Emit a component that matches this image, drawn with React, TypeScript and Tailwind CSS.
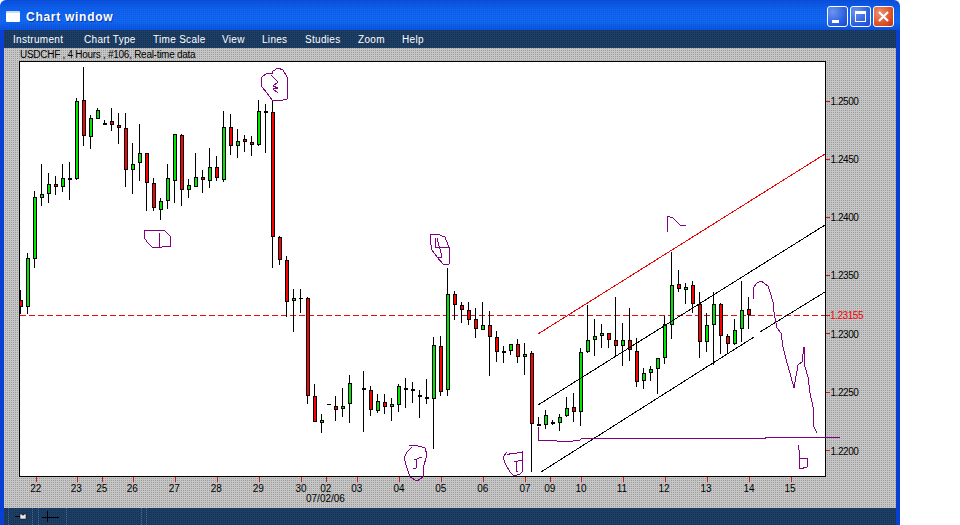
// Chart window: old forex charting app with hand drawn marks on top
type Candle = [number, number, number, number, number, 'g' | 'r' | 'd'];

// index, high, low, body top, body bottom, colour (all in page pixels)
const candles: Candle[] = [
  [0, 290, 314, 300, 307, 'r'], [1, 253, 314, 258, 307, 'g'], [2, 191, 268, 197, 259, 'g'], [3, 164, 206, 194, 198, 'g'],
  [4, 173, 203, 184, 194, 'g'], [5, 176, 195, 184, 187, 'r'], [6, 164, 192, 178, 187, 'g'], [7, 162, 200, 178, 180, 'd'],
  [8, 98, 180, 101, 179, 'g'], [9, 67, 146, 100, 136, 'r'], [10, 115, 149, 118, 137, 'g'], [11, 108, 119, 110, 119, 'g'],
  [12, 120, 125, 123, 125, 'd'], [13, 108, 131, 121, 125, 'r'], [14, 113, 144, 125, 128, 'r'], [15, 113, 187, 128, 170, 'r'],
  [16, 143, 194, 164, 170, 'g'], [17, 124, 181, 153, 163, 'g'], [18, 153, 211, 153, 183, 'r'], [19, 178, 211, 183, 208, 'r'],
  [20, 198, 220, 201, 210, 'g'], [21, 164, 209, 178, 201, 'g'], [22, 134, 203, 134, 181, 'g'], [23, 134, 206, 135, 190, 'r'],
  [24, 179, 198, 185, 190, 'g'], [25, 153, 187, 177, 187, 'g'], [26, 170, 193, 177, 180, 'r'], [27, 148, 188, 167, 181, 'g'],
  [28, 156, 181, 167, 178, 'r'], [29, 111, 182, 127, 180, 'g'], [30, 114, 155, 127, 146, 'r'], [31, 129, 158, 141, 146, 'g'],
  [32, 135, 152, 139, 142, 'r'], [33, 136, 156, 142, 145, 'r'], [34, 100, 146, 111, 145, 'g'], [35, 104, 153, 111, 113, 'r'],
  [36, 100, 268, 112, 237, 'r'], [37, 236, 265, 237, 260, 'r'], [38, 256, 317, 260, 302, 'r'], [39, 289, 332, 298, 301, 'g'],
  [40, 289, 313, 298, 299, 'd'], [41, 297, 404, 298, 396, 'r'], [42, 384, 422, 396, 422, 'r'], [43, 414, 433, 420, 423, 'g'],
  [44, 404, 405, 404, 405, 'd'], [45, 396, 421, 406, 410, 'r'], [46, 388, 417, 406, 409, 'g'], [47, 375, 423, 383, 404, 'g'],
  [49, 371, 432, 388, 390, 'r'], [50, 386, 416, 390, 410, 'r'], [51, 394, 413, 401, 411, 'g'], [52, 394, 414, 402, 407, 'r'],
  [53, 398, 421, 404, 407, 'g'], [54, 384, 412, 386, 405, 'g'], [55, 378, 408, 388, 390, 'd'], [56, 382, 403, 389, 391, 'd'],
  [57, 390, 418, 395, 397, 'r'], [58, 379, 404, 397, 399, 'r'], [59, 337, 449, 345, 399, 'g'], [60, 336, 396, 346, 392, 'r'],
  [61, 268, 396, 294, 390, 'g'], [62, 291, 320, 294, 305, 'r'], [63, 302, 323, 305, 310, 'r'], [64, 302, 325, 310, 320, 'r'],
  [65, 308, 338, 319, 329, 'r'], [66, 302, 330, 325, 330, 'g'], [67, 311, 376, 325, 337, 'r'], [68, 331, 362, 337, 352, 'r'],
  [69, 346, 363, 351, 353, 'g'], [70, 344, 355, 344, 351, 'g'], [71, 339, 363, 344, 357, 'r'], [72, 343, 375, 354, 357, 'g'],
  [73, 351, 472, 353, 424, 'r'], [74, 417, 426, 424, 426, 'd'], [75, 410, 429, 415, 425, 'g'], [76, 420, 425, 422, 424, 'd'],
  [77, 414, 431, 417, 423, 'g'], [78, 397, 417, 408, 416, 'g'], [79, 393, 422, 407, 412, 'r'], [80, 348, 426, 352, 412, 'g'],
  [81, 305, 353, 340, 352, 'g'], [82, 319, 356, 336, 340, 'g'], [83, 324, 348, 333, 336, 'g'], [84, 333, 348, 333, 340, 'r'],
  [85, 297, 357, 340, 346, 'r'], [86, 323, 366, 340, 346, 'g'], [87, 308, 361, 340, 350, 'r'], [88, 338, 387, 351, 382, 'r'],
  [89, 368, 389, 373, 381, 'g'], [90, 366, 381, 369, 373, 'g'], [91, 358, 394, 358, 369, 'g'], [92, 316, 364, 324, 358, 'g'],
  [93, 252, 339, 285, 325, 'g'], [94, 270, 292, 284, 289, 'r'], [95, 283, 304, 287, 290, 'g'], [96, 281, 313, 285, 304, 'r'],
  [97, 292, 358, 304, 342, 'r'], [98, 313, 352, 325, 342, 'g'], [99, 292, 365, 304, 325, 'g'], [100, 303, 354, 304, 336, 'r'],
  [101, 334, 354, 336, 344, 'r'], [102, 319, 345, 330, 344, 'g'], [103, 281, 342, 310, 329, 'g'], [104, 297, 329, 309, 315, 'r'],
];

const priceLabels = [
  { y: 101, label: '1.2500' },
  { y: 159, label: '1.2450' },
  { y: 217, label: '1.2400' },
  { y: 275, label: '1.2350' },
  { y: 333.5, label: '1.2300' },
  { y: 392, label: '1.2250' },
  { y: 450.5, label: '1.2200' },
];

const dateLabels: [number, number, string][] = [
  [36, 35.7, '22'], [77, 76.3, '23'], [102, 101.7, '25'], [133, 132.3, '26'], [175, 174.3, '27'], [217, 216.3, '28'],
  [259, 258.3, '29'], [301, 301, '30'], [326, 325.7, '02'], [357, 356.7, '03'], [399, 399, '04'], [441, 440.7, '05'],
  [483, 482.7, '06'], [525, 525, '07'], [550, 549.7, '09'], [581, 581, '10'], [623, 622, '11'], [665, 664, '12'],
  [707, 706, '13'], [749, 749, '14'], [791, 790, '15'],
];

// the purple pen marks
const scribbles = [
  '262,77 267,73 272,74 273,71 278,68 283,70 287,77 287,99 283,100 272,100 267,93 262,87 261,82 262,77',
  '271,75 278,82 273,86 278,88 273,89 278,93',
  '144,230 152,231 153,230 164,230 170,236 171,246 162,247 152,247 147,242 144,237 144,230',
  '159,233 159,247',
  '431,234 437,234 445,237 448,245 450,250 449,264 443,264 437,257 432,250 430,240 431,234',
  '435,238 435,248 448,247',
  '437,238 442,257 438,258',
  '409,445 415,445 425,448 427,455 423,468 423,477 417,481 410,477 407,468 404,458 407,452 412,447',
  '414,460 422,457',
  '417,460 416,468 413,468',
  '507,452 503,457 505,463 510,472 514,476 520,474 522,472 522,452 517,453 512,453 507,455',
  '514,462 522,460',
  '517,462 516,471 518,472',
  '667,232 667,216 673,218 680,225 686,226',
  '754,299 753,288 754,287 757,283 761,281 768,286 770,292 773,302 774,312 775,318 777,328 781,333 783,347 787,363 790,373 794,388 798,365 802,362 804,347 805,367 808,377 810,393 813,407 814,427 817,433',
  '538,427 538,440 555,440 557,441 573,441 575,440 580,440 582,438 765,438 765,437 840,437',
  '798,445 799,450 800,469 807,467 807,458 800,458',
];

const menus = [
  { label: 'Instrument', width: 'w-[71px]' },
  { label: 'Chart Type', width: 'w-[69px]' },
  { label: 'Time Scale', width: 'w-[69px]' },
  { label: 'View', width: 'w-[40px]' },
  { label: 'Lines', width: 'w-[43px]' },
  { label: 'Studies', width: 'w-[53px]' },
  { label: 'Zoom', width: 'w-[44px]' },
  { label: 'Help', width: 'w-[30px]' },
];

function Candles() {
  return (
    <g shapeRendering="crispEdges">
      {candles.map(([i, hi, lo, top, bot, c]) => (
        <g key={i}>
          <rect x={20 + 7 * i} y={hi} width={1} height={lo - hi} fill="#000" />
          {c === 'd' ? (
            <rect x={19 + 7 * i} y={top} width={4} height={bot - top} fill="#000" />
          ) : (
            <rect
              x={19.5 + 7 * i}
              y={top + 0.5}
              width={3}
              height={bot - top - 1}
              fill={c === 'g' ? '#00e600' : '#ff0000'}
              stroke="#000"
            />
          )}
        </g>
      ))}
    </g>
  );
}

function Chart() {
  return (
    <svg viewBox="4 61 892 447" className="w-[892px] h-[447px] block">
      <rect x={19.5} y={61.5} width={806} height={415} fill="#fff" stroke="#000" shapeRendering="crispEdges" />

      <line x1={20} y1={315.5} x2={825} y2={315.5} stroke="#e01010" strokeDasharray="6 3" shapeRendering="crispEdges" />
      <Candles />

      {/* channel */}
      <g shapeRendering="crispEdges">
        <line x1={538} y1={334} x2={825} y2={154} stroke="#f00000" />
        <line x1={538} y1={405} x2={825} y2={225} stroke="#000" />
        <line x1={541} y1={472} x2={754} y2={337} stroke="#000" />
        <line x1={760} y1={332} x2={825} y2={292} stroke="#000" />
      </g>

      <g shapeRendering="crispEdges">
        {scribbles.map((points) => (
          <polyline key={points} points={points} fill="none" stroke="#800080" strokeWidth={1} />
        ))}
      </g>

      {/* price axis */}
      {priceLabels.map(({ y, label }) => (
        <g key={label}>
          <rect x={826} y={Math.floor(y)} width={4} height={1} fill="#e01010" />
          <text x={830.5} y={y + 4} fontSize={10} letterSpacing={-0.45} fill="#000">
            {label}
          </text>
        </g>
      ))}
      <rect x={826} y={315} width={4} height={1} fill="#e01010" />
      <text x={830} y={319} fontSize={10} letterSpacing={-0.45} fill="#f00000">
        1.23155
      </text>

      {/* time axis */}
      {dateLabels.map(([tick, center, label]) => (
        <g key={label}>
          <rect x={tick} y={477} width={1} height={5} fill="#e01010" />
          <text x={center} y={492} fontSize={10} textAnchor="middle" fill="#000">
            {label}
          </text>
        </g>
      ))}
      <text x={306} y={502} fontSize={10} fill="#000">
        07/02/06
      </text>
    </svg>
  );
}

function WindowButton({ red, children }: { red?: boolean; children: React.ReactNode }) {
  return (
    <div
      className={
        red
          ? 'w-[21px] h-[21px] rounded-[3px] border border-white flex items-center justify-center bg-[radial-gradient(circle_at_30%_30%,#f09070,#d84a20_70%,#b83010)]'
          : 'w-[21px] h-[21px] rounded-[3px] border border-white flex items-center justify-center bg-[radial-gradient(circle_at_25%_25%,#6c94ee,#2a5ee0_65%,#1c48c8)]'
      }
    >
      {children}
    </div>
  );
}

function TitleBar() {
  return (
    <div className="h-[30px] flex items-center pl-[6px] pr-[6px] rounded-t-[6px] [background:conic-gradient(#0038b033_25%,#0000_0)_0_0/2px_2px,linear-gradient(#0a4edb,#0f62ee_30%,#1268f2_70%,#0a52de)]">
      <div className="w-[14px] h-[11px] bg-white rounded-[1px] border-t-2 border-[#c8dcf8] mt-[3px]" />
      <span className="ml-[6px] mt-[3px] text-[12px] font-bold tracking-[0.72px] text-white [text-shadow:1px_1px_0_#0a3aa8]">
        Chart window
      </span>
      <div className="ml-auto flex gap-[2px] mt-[3px]">
        <WindowButton>
          <div className="w-[7px] h-[3px] bg-white mt-[9px] mr-[4px]" />
        </WindowButton>
        <WindowButton>
          <div className="w-[11px] h-[11px] border border-white border-t-[3px]" />
        </WindowButton>
        <WindowButton red>
          <svg viewBox="0 0 13 13" className="w-[13px] h-[13px]">
            <path d="M2 2 L11 11 M11 2 L2 11" stroke="#fff" strokeWidth={2.2} fill="none" />
          </svg>
        </WindowButton>
      </div>
    </div>
  );
}

function MenuBar() {
  return (
    <div className="h-[18px] flex items-center pl-[9px] text-[10px] tracking-[0.3px] text-white [background:conic-gradient(#12305a_25%,#1f3f62_0)_0_0/2px_2px]">
      {menus.map((menu) => (
        <span key={menu.label} className={menu.width}>
          {menu.label}
        </span>
      ))}
    </div>
  );
}

function StatusBar() {
  return (
    <div className="h-[17px] flex [background:conic-gradient(#12305a_25%,#1f3f62_0)_0_0/2px_2px]">
      <div className="w-[25px] ml-[4px] flex items-center justify-center border-x border-dotted border-[#3f6d9c]">
        <svg viewBox="0 0 12 7" className="w-[12px] h-[7px]">
          <path d="M0 3.5 H5" stroke="#000" fill="none" />
          <path d="M5 1 H7 V2 H9 V1 H11 V6 H5 Z" fill="#e8e8e8" stroke="#000" strokeWidth={0.5} />
        </svg>
      </div>
      <div className="w-[24px] ml-[5px] flex items-center justify-center border-l border-dotted border-[#3f6d9c]">
        <svg viewBox="0 0 17 11" className="w-[17px] h-[11px] shrink-0">
          <path d="M0 6.5 H17 M5.5 0 V11" stroke="#000" fill="none" />
        </svg>
      </div>
      <div className="w-[5px] border-r border-dotted border-[#3f6d9c]" />
      <div className="w-[75px] border-r border-dotted border-[#3f6d9c]" />
      <div className="w-[5px] border-r border-dotted border-[#3f6d9c]" />
    </div>
  );
}

export default function App() {
  return (
    <div className="w-[960px] h-[525px] bg-white overflow-hidden font-['Liberation_Sans',Arial,sans-serif]">
      <div className="w-[900px] h-[525px] flex flex-col">
        <TitleBar />
        <div className="flex-1 border-x-4 border-[#0a3fd4] flex flex-col min-h-0">
          <MenuBar />
          <div className="flex-1 [background:conic-gradient(#9c9c9c_25%,#c6c6c6_0)_0_0/2px_2px]">
            <div className="h-[13px] pl-[16px] text-[10px] leading-[13px] tracking-[-0.28px] text-black">
              USDCHF , 4 Hours , #106, Real-time data
            </div>
            <Chart />
          </div>
          <StatusBar />
        </div>
      </div>
    </div>
  );
}
